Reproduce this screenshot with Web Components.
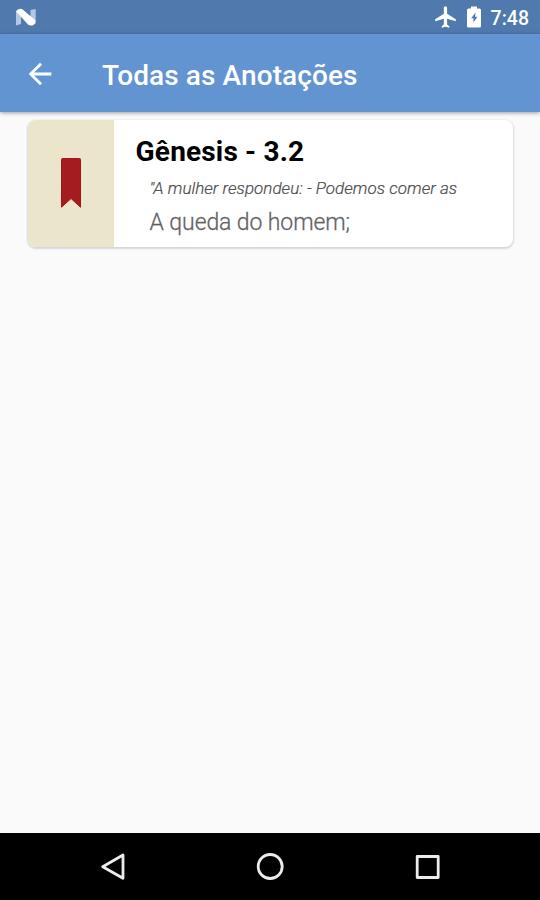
<!DOCTYPE html>
<html lang="pt-BR">
<head>
<meta charset="utf-8">
<title>Todas as Anotações</title>
<style>
html, body { margin: 0; height: 100%; overflow: hidden; }
body { font-family: Roboto, "Noto Sans", sans-serif; background: #fafafa; }
</style>
</head>
<body>
<notes-screen></notes-screen>
<script>
function define(name, markup) {
  const template = document.createElement('template');
  template.innerHTML = markup;
  customElements.define(name, class extends HTMLElement {
    constructor() {
      super();
      this.attachShadow({ mode: 'open' }).append(template.content.cloneNode(true));
    }
  });
}

define('status-bar', `
<style>
:host { display: flex; align-items: center; box-sizing: border-box; height: 34px; padding: 0 11px 0 15px; background: #5079ad; color: #fff; }
svg { display: block; flex: none; }
.space { flex: 1; }
.plane { margin-right: 8px; }
.battery { margin-right: 9px; }
time { font-size: 19.5px; font-weight: 500; line-height: 34px; margin-top: 3px; }
</style>
<svg width="22" height="34" viewBox="0 0 22 34">
  <path d="M1 11L6 9.5V24L1 25.5Z" fill="#b3c8e2"/><path d="M15.500 10L20.700 9V23.500L15.500 25Z" fill="#b3c8e2"/>
  <path d="M1.200 11.500Q1.700 9.200 4.500 8.900Q6.800 8.600 8.300 9.900L20.500 20.500Q20.300 25.200 17 25.400Q14.500 25.600 13 24.500Z" fill="#fff"/>
</svg>
<span class="space"></span>
<svg class="plane" width="26" height="26" viewBox="0 0 24 24" fill="#fff"><path d="M21 16v-2l-8-5V3.500c0-.83-.67-1.500-1.500-1.500S10 2.670 10 3.500V9l-8 5v2l8-2.500V19l-2 1.500V22l3.500-1 3.500 1v-1.500L13 19v-5.500l8 2.500z"/></svg>
<svg class="battery" width="15" height="34" viewBox="0 0 15 34"><path d="M4 6.500H10V8.500H12.500Q14 8.500 14 10V26Q14 27.500 12.500 27.500H1.500Q0 27.500 0 26V10Q0 8.500 1.500 8.500H4Z" fill="#fff"/><path d="M8.500 12.500L4.200 18.300H6.500V22.500L10.400 16.700H8Z" fill="#5079ad"/></svg>
<time><slot></slot></time>`);

define('app-bar', `
<style>
:host { display: flex; align-items: center; box-sizing: border-box; height: 78px; padding: 2px 0 0 23px; background: #6194d0; color: #fff; box-shadow: 0 1px 4px rgba(0,0,0,.38); z-index: 1; }
svg { display: block; flex: none; margin-right: 45px; margin-bottom: 1px; }
h1 { margin: 3px 0 0; font-size: 28px; letter-spacing: .09px; font-weight: 500; line-height: 36px; white-space: nowrap; }
</style>
<svg width="34" height="34" viewBox="0 0 24 24" fill="#fff"><path d="M20 11H7.830l5.590-5.590L12 4l-8 8 8 8 1.410-1.410L7.830 13H20v-2z"/></svg>
<h1><slot></slot></h1>`);

define('note-card', `
<style>
:host { display: flex; height: 127px; border-radius: 8px; overflow: hidden; background: #fff; box-shadow: 0 1px 2px 1px rgba(0,0,0,.14); }
.mark { flex: none; width: 86px; display: flex; align-items: center; justify-content: center; background: #ebe5cb; }
.mark svg { display: block; margin-bottom: 1px; }
.text { display: flex; flex-direction: column; padding: 14px 0 0 21.600px; white-space: nowrap; }
.ref { font-size: 28px; letter-spacing: .17px; line-height: 36px; font-weight: 700; color: #000; }
.verse { font-size: 17px; letter-spacing: .02px; line-height: 24px; font-style: italic; font-weight: 300; color: #3a3a3a; -webkit-text-stroke: .2px #666; margin: 6px 0 0 14px; }
.note { font-size: 23px; letter-spacing: -.1px; line-height: 30px; font-weight: 300; color: #5c5c5c; -webkit-text-stroke: .3px #707070; margin: 8px 0 0 14px; }
</style>
<div class="mark"><svg width="22" height="52" viewBox="0 0 22 52"><path d="M2.500 1.500H19.500Q20.500 1.500 20.500 2.500V50.200L11 41.500L1.500 50.200V2.500Q1.500 1.500 2.500 1.500Z" fill="#a51c20" stroke="#ab1218" stroke-width="1"/></svg></div>
<div class="text"><div class="ref"><slot name="ref"></slot></div><div class="verse"><slot name="verse"></slot></div><div class="note"><slot></slot></div></div>`);

define('nav-bar', `
<style>
:host { display: flex; align-items: center; justify-content: center; gap: 123px; height: 67px; background: #000; }
svg { display: block; fill: none; stroke: #ececec; stroke-width: 2.800; stroke-linejoin: round; }
</style>
<svg width="34" height="34" viewBox="0 0 34 34"><path d="M27 5V28.300L6.700 16.700Z"/></svg>
<svg width="34" height="34" viewBox="0 0 34 34"><circle cx="17.200" cy="16.500" r="12"/></svg>
<svg width="34" height="34" viewBox="0 0 34 34"><rect x="7.200" y="6.500" width="21" height="21"/></svg>`);

define('notes-screen', `
<style>
:host { display: flex; flex-direction: column; width: 540px; height: 900px; background: #fafafa; }
status-bar, app-bar, nav-bar { flex: none; }
main { flex: 1; padding: 8px 28px 0; }
note-card { width: 485px; }
</style>
<status-bar>7:48</status-bar>
<app-bar>Todas as Anotações</app-bar>
<main><note-card><span slot="ref">Gênesis - 3.2</span><span slot="verse">"A mulher respondeu: - Podemos comer as</span>A queda do homem;</note-card></main>
<nav-bar></nav-bar>`);
</script>
</body>
</html>
